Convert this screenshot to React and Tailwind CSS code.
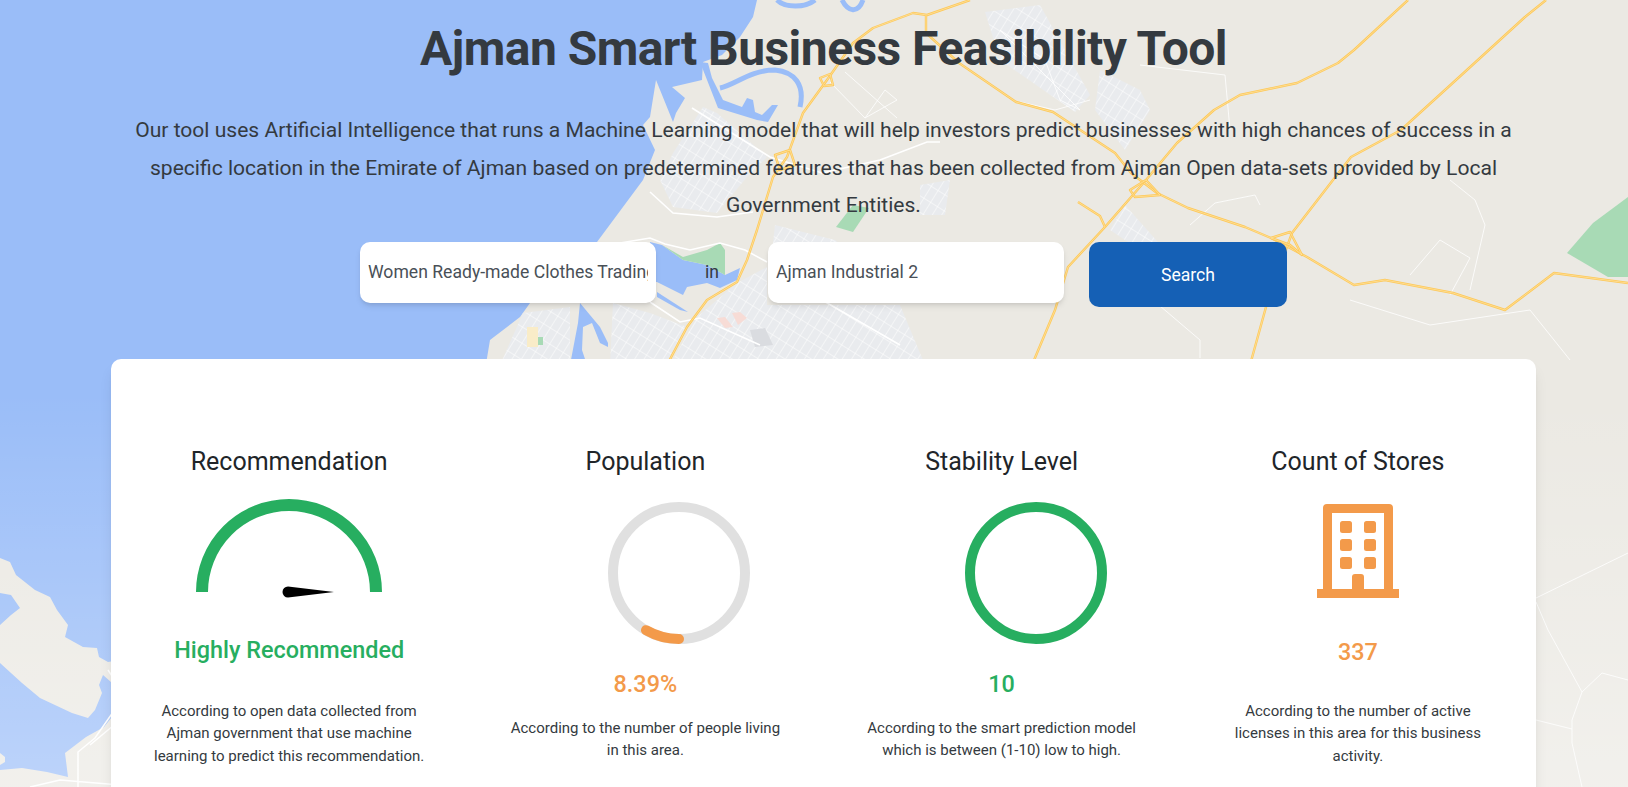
const roads = [
  'M1408 0L1354 50L1338 63L1297 83L1240 95L1214 110L1177 143L1146 180L1105 227L1068 267L1055 310L1032 365',
  'M1546 0L1525 17L1445 90L1401 130L1351 157L1333 180L1292 233L1275 280L1266 307L1250 365',
  'M970 0L927 15L913 13L873 28L853 43L827 80L803 113L787 157L773 177L757 230L747 260L737 282L707 300L687 327L667 365',
  'M926 15L926 33L959 63L1016 102L1053 112L1115 153L1131 173L1157 193L1188 208L1245 227L1271 238L1307 257L1354 285L1385 280L1453 293L1505 310L1554 273L1628 283',
  'M1078 202L1100 216L1105 227',
  'M1146 180L1130 190L1135 197L1160 195L1146 180',
  'M1271 238L1290 232L1302 255L1290 245L1271 238',
  'M775 155L790 150L795 165L780 170Z',
  'M820 78L830 74L833 85L824 86Z',
]

const whiteRoads = [
  'M1582 692L1572 720L1572 743L1582 787',
  'M1536 602L1548 630L1582 692',
  'M1536 598L1628 553',
  'M1536 720L1572 729',
  'M1582 692L1602 673L1628 680',
  'M1450 180L1475 200L1485 225L1470 290',
  'M1350 300L1430 325L1530 310L1570 360',
  'M1190 225L1215 203L1255 195L1260 205',
  'M1230 130L1225 75L1140 65',
  'M1000 30L1080 110L1060 100L1045 60L1000 30',
  'M1020 102L1055 110L1090 100',
  'M1153 300L1200 340L1200 358',
  'M1410 275L1440 240L1470 258L1450 295',
  'M830 82L865 118L897 100L885 90L865 118',
  'M845 72L897 118',
]

const mainRoads = [
  'M692 108L770 157L822 173L880 160L927 142L940 142',
  'M650 192L673 213L717 217L753 212',
  'M620 243L650 238L665 244L690 250L720 243L745 250L767 262',
  'M650 302L680 322L700 318L760 345M770 270L900 345',
]

const blocks = [
  'M985 12L1040 5L1090 95L1075 112L1000 60Z',
  'M1100 70L1140 90L1150 110L1125 150L1095 110Z',
  'M660 180L673 153L703 107L717 113L767 157L747 177L717 213L673 207Z',
  'M523 313L570 307L570 365L500 365Z',
  'M613 303L650 313L687 327L665 365L610 365Z',
  'M697 317L737 283L767 267L767 305L900 305L925 365L670 365Z',
  'M775 225L835 240L880 275L770 270Z',
  'M1125 205L1165 250L1140 250L1110 230Z',
  'M920 185L950 180L945 215L920 215Z',
]

function MapBackground() {
  return (
    <svg className="absolute inset-0 w-[1628px] h-[787px]" viewBox="0 0 1628 787">
      <defs>
        <pattern id="streets" width="8" height="14" patternUnits="userSpaceOnUse" patternTransform="rotate(32)">
          <rect width="8" height="14" fill="#e9ebee" />
          <path d="M0 0H8M0 0V14" stroke="#fff" strokeWidth="1" />
        </pattern>
        <linearGradient id="fade" x1="0" y1="0" x2="0" y2="1">
          <stop offset="0.5" stopColor="#fff" stopOpacity="0" />
          <stop offset="1" stopColor="#fff" stopOpacity="0.34" />
        </linearGradient>
      </defs>
      <rect width="1628" height="787" fill="#9abdf8" />

      {/* mainland, the part under the white card is never seen */}
      <path fill="#ebe9e3" d="M757 0L753 17L740 37L722 55L703 62L702 80L672 87L685 98L676 113L673 122L656 80L650 117L643 125L655 150L643 180L597 242L530 303L520 317L490 340L485 370L1628 370L1628 0Z" />
      <rect x="1536" y="358" width="92" height="429" fill="#ebe9e3" />

      {/* harbour, canal and creek */}
      <path fill="#9abdf8" d="M700 62L718 108L757 120L768 122L778 105L772 105L762 115L755 112L753 100L747 98L742 107L723 100L712 78L708 63Z" />
      <path fill="none" stroke="#9abdf8" strokeWidth="5" d="M720 88C735 85 750 70 775 70C795 72 805 85 800 107" />
      <path fill="none" stroke="#9abdf8" strokeWidth="5" d="M777 0C785 8 805 8 815 0M842 0C848 12 858 14 863 0" />

      {blocks.map((d, i) => (
        <path key={i} d={d} fill="url(#streets)" />
      ))}

      <path fill="#9abdf8" d="M650 242L662 245L683 260L707 265L725 275L740 268L737 280L720 288L707 283L687 287L683 295L657 282L650 282Z" />
      <path fill="#9abdf8" d="M657 292L688 312L680 310L657 297Z" />
      <path fill="#9abdf8" d="M580 303L600 327L608 343L608 347L600 343L592 323L583 327L582 350L587 365L570 365L578 323Z" />

      {/* green areas and small plots */}
      <path fill="#a8dab5" d="M662 245L683 257L707 250L720 243L725 250L725 275L707 265L683 260Z" />
      <path fill="#a8dab5" d="M853 205L869 208L853 232L836 227Z" />
      <path fill="#a8dab5" d="M1628 197L1593 223L1567 253L1608 277L1628 277Z" />
      <path fill="#a8dab5" d="M538 337H543V345H538Z" />
      <path fill="#f9ecc8" d="M527 327H538V347H527Z" />
      <path fill="#f7dcd6" d="M717 318L725 317L733 327L725 328Z" />
      <path fill="#f7dcd6" d="M732 313L740 312L747 318L738 325Z" />
      <path fill="#dadce0" d="M750 330L765 328L773 345L755 347Z" />

      {mainRoads.map((d, i) => (
        <path key={i} d={d} fill="none" stroke="#fff" strokeWidth="1.6" />
      ))}
      {whiteRoads.map((d, i) => (
        <path key={i} d={d} fill="none" stroke="#fff" strokeOpacity="0.8" strokeWidth="1" />
      ))}
      {roads.map((d, i) => (
        <g key={i} fill="none" strokeLinejoin="round">
          <path d={d} stroke="#fdc95a" strokeWidth="2.4" />
          <path d={d} stroke="#ffeab5" strokeWidth="0.6" />
        </g>
      ))}

      {/* lower left island */}
      <path fill="#ebe9e3" d="M0 558L10 562L16 575L35 590L50 597L57 610L68 625L65 637L83 647L97 648L99 657L108 662L120 660L120 690L103 675L99 685L102 693L95 710L88 718L72 713L40 698L22 683L0 663L0 625L11 615L20 608L11 595L0 593Z" />
      <path fill="#ebe9e3" d="M0 787L0 770L22 768L47 772L68 777L65 753L86 737L104 727L120 707L120 787Z" />
      <path fill="#ebe9e3" d="M0 753L5 757L5 762L0 765Z" />
      <path fill="none" stroke="#fff" strokeWidth="1.5" d="M108 670L118 685L118 705L95 738L78 752L78 787M120 720L90 745M30 787L60 780L120 785" />

      <rect width="1628" height="787" fill="url(#fade)" />
    </svg>
  )
}

function Gauge() {
  return (
    <svg className="mx-auto block" width="186" height="100" viewBox="0 0 186 100">
      <path d="M6 93A87 87 0 0 1 180 93" fill="none" stroke="#27ae60" strokeWidth="12" />
      <path d="M92 87.5L138 93L92 98.5A5.5 5.5 0 0 1 92 87.5Z" fill="#000" />
    </svg>
  )
}

function Ring({ color, arc }) {
  return (
    <svg className="block" width="142" height="142" viewBox="0 0 142 142">
      <circle cx="71" cy="71" r="66" fill="none" stroke={color} strokeWidth="10" />
      {arc && <path d="M71 137A66 66 0 0 1 38 128.2" fill="none" stroke={arc} strokeWidth="10" strokeLinecap="round" />}
    </svg>
  )
}

function BuildingIcon() {
  return (
    <svg className="mx-auto block" width="82" height="94" viewBox="0 0 82 94" fill="#f39a4a">
      <path fillRule="evenodd" d="M0 85H6V4Q6 0 10 0H72Q76 0 76 4V85H82V94H0ZM15 9V85H35V73Q35 70 38 70H44Q47 70 47 73V85H67V9Z" />
      <rect x="23" y="17" width="12" height="12" rx="2.5" />
      <rect x="47" y="17" width="12" height="12" rx="2.5" />
      <rect x="23" y="35" width="12" height="12" rx="2.5" />
      <rect x="47" y="35" width="12" height="12" rx="2.5" />
      <rect x="23" y="53" width="12" height="12" rx="2.5" />
      <rect x="47" y="53" width="12" height="12" rx="2.5" />
    </svg>
  )
}

function Heading({ children }) {
  return <h3 className="text-[25px] leading-[29px] text-[#212529] text-center">{children}</h3>
}

function Note({ children, className = '' }) {
  return <p className={`w-[280px] mx-auto text-center text-[15px] leading-[22.5px] text-[#343a40] ${className}`}>{children}</p>
}

export default function App() {
  return (
    <div className="relative h-screen overflow-hidden font-['Roboto',sans-serif]">
      <MapBackground />
      <div className="relative w-[1425px] ml-[111px]">
        <h1 className="pt-[20px] text-[48px] leading-[58px] font-bold tracking-[-0.55px] text-[#343a40] text-center">
          Ajman Smart Business Feasibility Tool
        </h1>
        <p className="mt-[33px] w-[1400px] mx-auto text-center text-[21.07px] leading-[37.5px] text-[#343a40]">
          Our tool uses Artificial Intelligence that runs a Machine Learning model that will help investors predict businesses with high chances of success in a specific location in the Emirate of Ajman based on predetermined features that has been collected from Ajman Open data-sets provided by Local Government Entities.
        </p>

        <div className="mt-[18px] pl-[249px] flex items-start">
          <input
            readOnly
            value="Women Ready-made Clothes Trading"
            className="w-[296px] h-[61px] px-2 bg-white rounded-[10px] shadow-md text-[17.6px] text-[#495057] outline-none"
          />
          <span className="w-[112px] h-[61px] flex items-center justify-center text-[17.6px] text-[#343a40]">in</span>
          <input
            readOnly
            value="Ajman Industrial 2"
            className="w-[296px] h-[61px] px-2 bg-white rounded-[10px] shadow-md text-[17.6px] text-[#495057] outline-none"
          />
          <button className="ml-[25px] w-[198px] h-[65px] pt-[2px] bg-[#1560b5] rounded-[10px] text-white text-[17.6px]">
            Search
          </button>
        </div>

        <div className="mt-[52px] h-[600px] pt-[88px] bg-white rounded-[10px] shadow-lg grid grid-cols-4 items-start">
          <div>
            <Heading>Recommendation</Heading>
            <div className="mt-[23px] h-[93px]">
              <Gauge />
            </div>
            <div className="mt-[44px] text-[23.4px] leading-[29px] font-medium text-[#27ae60] text-center">Highly Recommended</div>
            <Note className="mt-[35px]">According to open data collected from Ajman government that use machine learning to predict this recommendation.</Note>
          </div>

          <div>
            <Heading>Population</Heading>
            <div className="mt-[26px] flex justify-center translate-x-[34px]">
              <Ring color="#e0e0e0" arc="#f39a4a" />
            </div>
            <div className="mt-[26px] text-[23.4px] leading-[29px] font-medium text-[#f39a4a] text-center">8.39%</div>
            <Note className="mt-[18px]">According to the number of people living in this area.</Note>
          </div>

          <div>
            <Heading>Stability Level</Heading>
            <div className="mt-[26px] flex justify-center translate-x-[34px]">
              <Ring color="#27ae60" />
            </div>
            <div className="mt-[26px] text-[23.4px] leading-[29px] font-medium text-[#27ae60] text-center">10</div>
            <Note className="mt-[18px]">According to the smart prediction model which is between (1-10) low to high.</Note>
          </div>

          <div>
            <Heading>Count of Stores</Heading>
            <div className="mt-[28px]">
              <BuildingIcon />
            </div>
            <div className="mt-[40px] text-[23.4px] leading-[29px] font-medium text-[#f39a4a] text-center">337</div>
            <Note className="mt-[33px]">According to the number of active licenses in this area for this business activity.</Note>
          </div>
        </div>
      </div>
    </div>
  )
}
